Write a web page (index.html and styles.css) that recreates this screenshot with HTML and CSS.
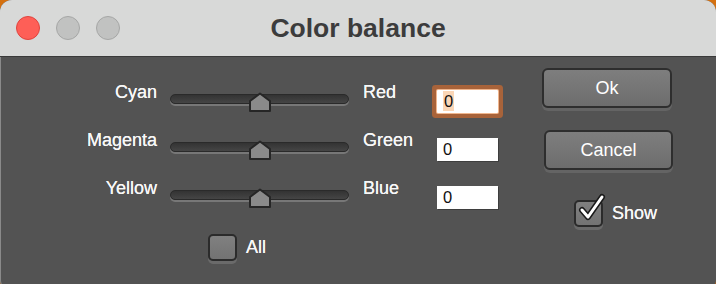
FILE: index.html
```html
<!DOCTYPE html>
<html lang="en">
<head>
    <meta charset="UTF-8">
    <title>Color balance</title>
    <link rel="stylesheet" href="styles.css">
</head>
<body>
    <div class="window">
        <div class="titlebar">
            <div class="lights">
                <span class="light red"></span>
                <span class="light"></span>
                <span class="light"></span>
            </div>
            <h1>Color balance</h1>
        </div>

        <div class="content">
            <div class="controls">
                <div class="row">
                    <div class="label left">Cyan</div>
                    <div class="slider">
                        <div class="track"></div>
                        <svg class="thumb" width="24" height="21" viewBox="0 0 24 21">
                            <polygon points="2,19 2,9 12,1.5 22,9 22,19" fill="#8a8a8a" stroke="#262626" stroke-width="2" stroke-linejoin="round"/>
                        </svg>
                    </div>
                    <div class="label right">Red</div>
                    <div class="field focused"><span class="sel">0</span></div>
                </div>
                <div class="row">
                    <div class="label left">Magenta</div>
                    <div class="slider">
                        <div class="track"></div>
                        <svg class="thumb" width="24" height="21" viewBox="0 0 24 21">
                            <polygon points="2,19 2,9 12,1.5 22,9 22,19" fill="#8a8a8a" stroke="#262626" stroke-width="2" stroke-linejoin="round"/>
                        </svg>
                    </div>
                    <div class="label right">Green</div>
                    <div class="field">0</div>
                </div>
                <div class="row">
                    <div class="label left">Yellow</div>
                    <div class="slider">
                        <div class="track"></div>
                        <svg class="thumb" width="24" height="21" viewBox="0 0 24 21">
                            <polygon points="2,19 2,9 12,1.5 22,9 22,19" fill="#8a8a8a" stroke="#262626" stroke-width="2" stroke-linejoin="round"/>
                        </svg>
                    </div>
                    <div class="label right">Blue</div>
                    <div class="field">0</div>
                </div>

                <div class="check all">
                    <span class="box"></span>
                    <span>All</span>
                </div>
            </div>

            <div class="actions">
                <button class="btn">Ok</button>
                <button class="btn cancel">Cancel</button>
                <div class="check show">
                    <span class="box">
                        <svg class="tick" width="30" height="30" viewBox="0 0 30 30">
                            <path d="M6 17 L12 24 L26 4" fill="none" stroke="#1a1a1a" stroke-width="6" stroke-linecap="round" stroke-linejoin="round"/>
                            <path d="M6 17 L12 24 L26 4" fill="none" stroke="#ffffff" stroke-width="3" stroke-linecap="round" stroke-linejoin="round"/>
                        </svg>
                    </span>
                    <span>Show</span>
                </div>
            </div>
        </div>
    </div>
</body>
</html>
```

FILE: styles.css
```css
body {
    margin: 0;
    background-color: #d4700f; /* desktop orange */
    font-family: 'Liberation Sans', Arial, sans-serif;
    overflow: hidden;
}

.window {
    width: 716px;
    height: 292px;
    background: #535353;
    border-radius: 12px;
    overflow: hidden;
    box-shadow: inset 1px 0 0 #8a8a8a;
}

.titlebar {
    height: 56px;
    background: #d8d9d8;
    border-bottom: 1px solid #3a3a3a;
    display: flex;
    align-items: center;
    position: relative;
}

.lights {
    display: flex;
    gap: 16px;
    padding-left: 16px;
}

.light {
    width: 22px;
    height: 22px;
    border-radius: 50%;
    background: #c1c2c1;
    border: 1px solid #a6a7a6;
}

.light.red {
    background: #fe5f57;
    border-color: #e0443e;
}

h1 {
    position: absolute;
    left: 0;
    right: 0;
    margin: 0;
    text-align: center;
    font-size: 26.5px;
    line-height: 56px;
    padding-bottom: 1px;
    color: #3c3c3c;
    font-weight: bold;
}

.content {
    display: flex;
    padding-top: 11px;
}

.controls {
    padding-top: 12px;
    width: 498px;
}

.row {
    display: flex;
    height: 48px;
    align-items: flex-start;
}

.label {
    font-size: 18px;
    line-height: 24px;
    color: #f7f7f7;
    text-shadow: 0 0 0.4px #ffffff;
}

.label.left {
    width: 157px;
    text-align: right;
}

.label.right {
    width: 74px;
}

.slider {
    position: relative;
    width: 179px;
    height: 20px;
    margin: 13px 14px 0 13px;
}

.track {
    margin-top: 1px;
    height: 8px;
    border: 1px solid #2a2a2a;
    border-radius: 5px;
    background: linear-gradient(#333333, #454545);
    box-shadow: 0 2px 0 #777777;
}

.thumb {
    position: absolute;
    left: 78px;
    top: -1px;
}

.field {
    width: 55px;
    height: 23px;
    margin-top: 10px;
    padding-left: 6px;
    background: #ffffff;
    color: #111111;
    font-size: 16.5px;
    line-height: 22px;
    box-shadow: 1px 1px 0 #3e3e3e;
}

.field.focused {
    box-shadow: 0 0 0 1px #f0b68e, 0 0 0 5px #a8633a;
    border-radius: 1px;
}

.sel {
    display: inline-block;
    background: #fbd6b6;
    padding: 0 1px;
    line-height: 20px;
}

.check {
    display: flex;
    align-items: center;
    gap: 9px;
    font-size: 18px;
    color: #f7f7f7;
    text-shadow: 0 0 0.4px #ffffff;
}

.box {
    position: relative;
    width: 25px;
    height: 23px;
    border: 2px solid #2b2b2b;
    border-radius: 5px;
    background: linear-gradient(#808080, #737373);
    box-shadow: 0 3px 0 #6a6a6a;
}

.check.all {
    margin: 10px 0 0 208px;
}

.tick {
    position: absolute;
    left: 0;
    top: -9px;
}

.actions {
    margin-left: 44px;
    display: flex;
    flex-direction: column;
    align-items: flex-start;
}

.btn {
    width: 130px;
    height: 40px;
    border: 2px solid #2e2e2e;
    border-radius: 6px;
    background: linear-gradient(#7e7e7e, #6d6d6d);
    box-shadow: 0 3px 0 #646464;
    color: #ffffff;
    font-family: 'Liberation Sans', Arial, sans-serif;
    font-size: 18px;
    padding: 0;
}

.btn.cancel {
    margin: 22px 0 0 2px;
    width: 129px;
}

.check.show {
    margin: 30px 0 0 32px;
}
```
